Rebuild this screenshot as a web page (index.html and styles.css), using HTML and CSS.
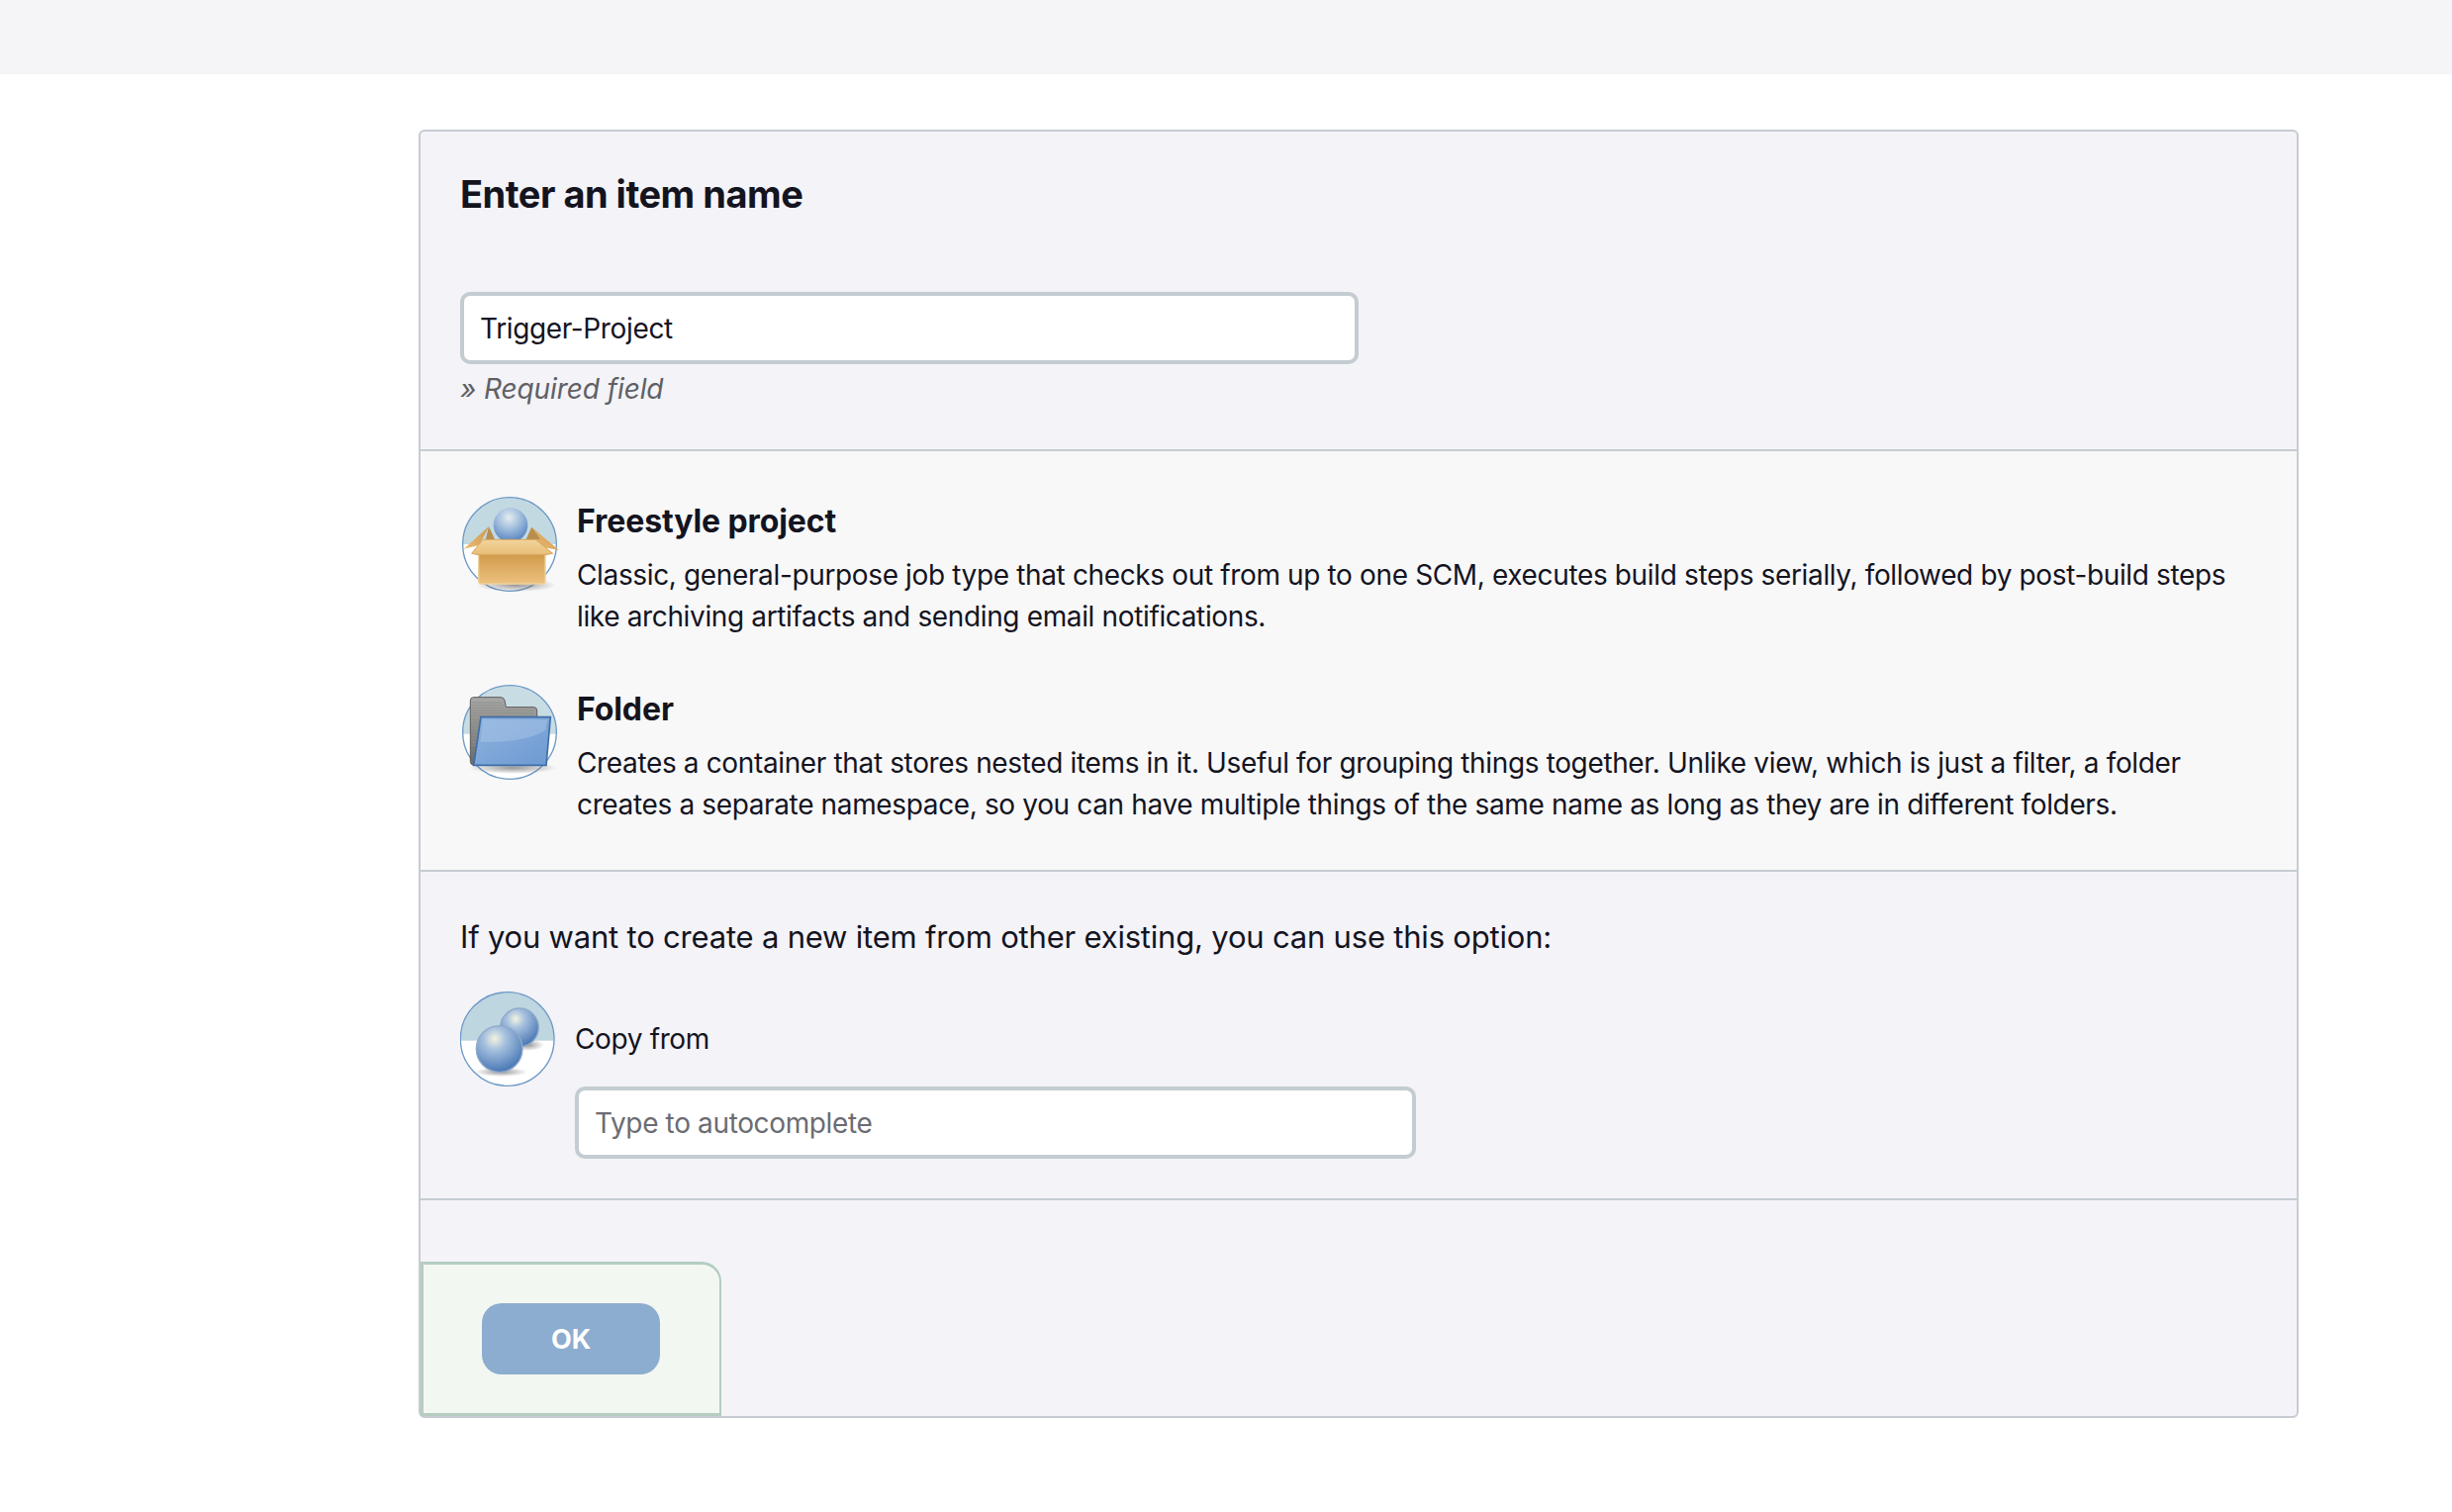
FILE: index.html
```html
<!DOCTYPE html>
<html lang="en">
<head>
<meta charset="utf-8">
<title>New Item</title>
<link rel="stylesheet" href="styles.css">
</head>
<body>
<header class="topbar"></header>
<main class="main">
  <form class="panel">
    <section class="section name-section">
      <h2 class="title">Enter an item name</h2>
      <input class="field name-field" type="text" value="Trigger-Project">
      <div class="required">» Required field</div>
    </section>
    <section class="section types-section">
      <div class="type">
        <svg class="type-icon" viewBox="45 33 300 300" width="100" height="100">
          <defs>
            <radialGradient id="ball1" cx="0.45" cy="0.28" r="0.75"><stop offset="0" stop-color="#e6edef"/><stop offset="0.4" stop-color="#a9c3e0"/><stop offset="1" stop-color="#4f7fbc"/></radialGradient>
            <linearGradient id="boxfront" x1="0" y1="0" x2="0" y2="1"><stop offset="0" stop-color="#cf9848"/><stop offset="1" stop-color="#ecc27e"/></linearGradient>
            <linearGradient id="flapl" x1="1" y1="0" x2="0" y2="1"><stop offset="0" stop-color="#c9974f"/><stop offset="1" stop-color="#eebd72"/></linearGradient>
            <linearGradient id="fronttop" x1="0" y1="0" x2="0" y2="1"><stop offset="0" stop-color="#f2d49c"/><stop offset="1" stop-color="#e8bd78"/></linearGradient>
            <radialGradient id="shade1" cx="0.5" cy="0.5" r="0.5"><stop offset="0" stop-color="#6a6a6a" stop-opacity="0.7"/><stop offset="1" stop-color="#6a6a6a" stop-opacity="0"/></radialGradient>
            <clipPath id="disc1"><circle cx="195" cy="180" r="141"/></clipPath>
          </defs>
          <circle cx="195" cy="180" r="141" fill="#fff"/>
          <rect x="50" y="35" width="290" height="145" fill="#c3d9e2" clip-path="url(#disc1)"/>
          <circle cx="195" cy="180" r="142" fill="none" stroke="#6b98c6" stroke-width="4"/>
          <ellipse cx="215" cy="304" rx="122" ry="20" fill="url(#shade1)"/>
          <path d="M132 126 L56 194 L100 184 L112 166 Z" fill="url(#flapl)"/>
          <path d="M262 128 L345 198 L300 190 L268 165 Z" fill="url(#flapl)"/>
          <path d="M122 168 L132 126 L150 165 Z M245 165 L262 128 L288 165 Z" fill="#b98d4e"/>
          <circle cx="198" cy="122" r="52" fill="url(#ball1)"/>
          <rect x="101" y="205" width="202" height="95" rx="8" fill="url(#boxfront)" stroke="#edd09a" stroke-width="4"/>
          <path d="M114 166 L274 166 L326 208 L304 212 L100 212 L80 208 Z" fill="url(#fronttop)" stroke="#d8a75e" stroke-width="3"/>
        </svg>
        <div class="type-body">
          <div class="type-name">Freestyle project</div>
          <p class="type-desc">Classic, general-purpose job type that checks out from up to one SCM, executes build steps serially, followed by post-build steps like archiving artifacts and sending email notifications.</p>
        </div>
      </div>
      <div class="type">
        <svg class="type-icon" viewBox="45 33 300 300" width="100" height="100">
          <defs>
            <linearGradient id="tab" x1="0" y1="0" x2="0" y2="1"><stop offset="0" stop-color="#a8a8a6"/><stop offset="1" stop-color="#6a6a68"/></linearGradient>
            <linearGradient id="front" x1="0" y1="0" x2="1" y2="1"><stop offset="0" stop-color="#8fb2dd"/><stop offset="1" stop-color="#6d9ad2"/></linearGradient>
            <clipPath id="disc2"><circle cx="195" cy="180" r="141"/></clipPath>
          </defs>
          <circle cx="195" cy="180" r="141" fill="#fff"/>
          <rect x="50" y="35" width="290" height="150" fill="#c8dde3" clip-path="url(#disc2)"/>
          <circle cx="195" cy="180" r="142" fill="none" stroke="#6b98c6" stroke-width="4"/>
          <ellipse cx="205" cy="288" rx="135" ry="18" fill="url(#shade1)"/>
          <path d="M85 280 Q76 278 76 268 L76 84 Q76 74 86 74 L168 74 Q178 74 180 84 L184 104 L268 104 Q278 104 278 114 L278 140 L110 140 Z" fill="url(#tab)" stroke="#5c5c5b" stroke-width="3"/>
          <path d="M82 90 H172 M82 98 H176 M82 106 H180 M82 114 H272 M82 122 H272 M82 130 H272 M82 140 H108 M82 150 H106 M82 160 H104 M82 170 H102 M82 180 H100 M82 190 H99 M82 200 H98 M82 210 H96 M82 220 H94" stroke="#8f8f8e" stroke-width="2.5"/>
          <path d="M108 134 L319 134 L306 280 L86 280 Z" fill="url(#front)" stroke="#3f6ea8" stroke-width="5"/>
          <path d="M114 142 L310 142 L304 174 Q240 212 106 210 Z" fill="#a8c5e8" opacity="0.5"/>
        </svg>
        <div class="type-body">
          <div class="type-name">Folder</div>
          <p class="type-desc">Creates a container that stores nested items in it. Useful for grouping things together. Unlike view, which is just a filter, a folder creates a separate namespace, so you can have multiple things of the same name as long as they are in different folders.</p>
        </div>
      </div>
    </section>
    <section class="section copy-section">
      <div class="copy-hint">If you want to create a new item from other existing, you can use this option:</div>
      <div class="copy-row">
        <svg class="copy-icon" viewBox="46 36 288 288" width="96" height="96">
          <defs>
            <radialGradient id="ball2" cx="0.4" cy="0.28" r="0.78"><stop offset="0" stop-color="#f3f3de"/><stop offset="0.3" stop-color="#a8c2df"/><stop offset="1" stop-color="#3f70b0"/></radialGradient>
            <clipPath id="disc3"><circle cx="189" cy="180" r="141"/></clipPath>
          </defs>
          <circle cx="189" cy="180" r="141" fill="#fff"/>
          <rect x="40" y="30" width="300" height="155" fill="#bed6e0" clip-path="url(#disc3)"/>
          <circle cx="189" cy="180" r="142" fill="none" stroke="#6b98c6" stroke-width="4"/>
          <ellipse cx="250" cy="198" rx="50" ry="18" fill="url(#shade1)"/>
          <ellipse cx="170" cy="280" rx="80" ry="14" fill="url(#shade1)"/>
          <circle cx="226" cy="145" r="58" fill="url(#ball2)" stroke="#8faacb" stroke-width="4"/>
          <circle cx="165" cy="210" r="70" fill="url(#ball2)" stroke="#8faacb" stroke-width="4"/>
        </svg>
        <label class="copy-label">Copy from</label>
      </div>
      <input class="field copy-field" type="text" placeholder="Type to autocomplete">
    </section>
    <section class="section footer-section">
      <div class="footer-box"><button class="ok" type="button">OK</button></div>
    </section>
  </form>
</main>
</body>
</html>
```
FILE: styles.css
```css
* { box-sizing: border-box; }
html, body { margin: 0; background: #fff; }
body { font-family: Inter, "Noto Sans", sans-serif; color: #14141f; height: 1528px; overflow: hidden; letter-spacing: -0.36px; }
.topbar { height: 75px; background: #f5f5f7; }
.main { padding: 56px 155px 0 423px; }
.panel {
  width: 1900px;
  border: 2px solid #c6ccd2;
  border-radius: 6px;
  background: #f3f3f8;
  display: flex;
  flex-direction: column;
}
.section { border-bottom: 2px solid #c6ccd2; padding-left: 40px; padding-right: 40px; }
.section:last-child { border-bottom: 0; }
.name-section { height: 323px; padding-top: 40px; }
.title { margin: 0 0 76px; font-size: 38px; line-height: 46px; font-weight: 700; letter-spacing: -0.5px; }
.field {
  display: block;
  height: 73px;
  border: 4px solid #c3ccd1;
  border-radius: 10px;
  background: #fff;
  padding: 0 16px;
  font: 28px Inter, sans-serif;
  letter-spacing: -0.36px;
  color: #14141f;
  outline: none;
}
.name-field { width: 908px; }
.required { margin-top: 7px; font-size: 28px; line-height: 36px; font-style: italic; color: #5f6065; letter-spacing: -0.1px; }
.types-section { height: 425px; background: #f8f8f9; padding-top: 46px; }
.type { display: flex; height: 190px; }
.type-icon { flex: none; margin: -1px 18px 0 0; }
.type-name { padding-top: 5px; font-size: 32px; line-height: 40px; font-weight: 700; letter-spacing: -0.1px; }
.type-desc { margin: 13px 0 0; font-size: 28px; line-height: 42px; width: 1685px; }
.copy-section { height: 332px; padding-top: 46px; }
.copy-hint { font-size: 31px; line-height: 40px; letter-spacing: -0.2px; }
.copy-row { display: flex; align-items: center; margin-top: 35px; gap: 20px; }
.copy-icon { flex: none; }
.copy-label { font-size: 28px; line-height: 36px; }
.copy-field { width: 850px; margin: 0 0 0 116px; }
.copy-field::placeholder { color: #6b6c72; opacity: 1; }
.footer-section { height: 218px; padding: 62px 0 0; display: flex; }
.footer-box {
  width: 304px;
  height: 156px;
  border: 3px solid #b4cdc0;
  border-right-width: 2px;
  border-radius: 0 20px 0 0;
  background: #f3f7f2;
  padding: 39px 0 0 59px;
}
.ok {
  display: block;
  width: 180px;
  height: 72px;
  border: 0;
  border-radius: 20px;
  background: #8cadcf;
  color: #fff;
  font: 700 27px Inter, sans-serif;
  padding-top: 2px;
}
```
